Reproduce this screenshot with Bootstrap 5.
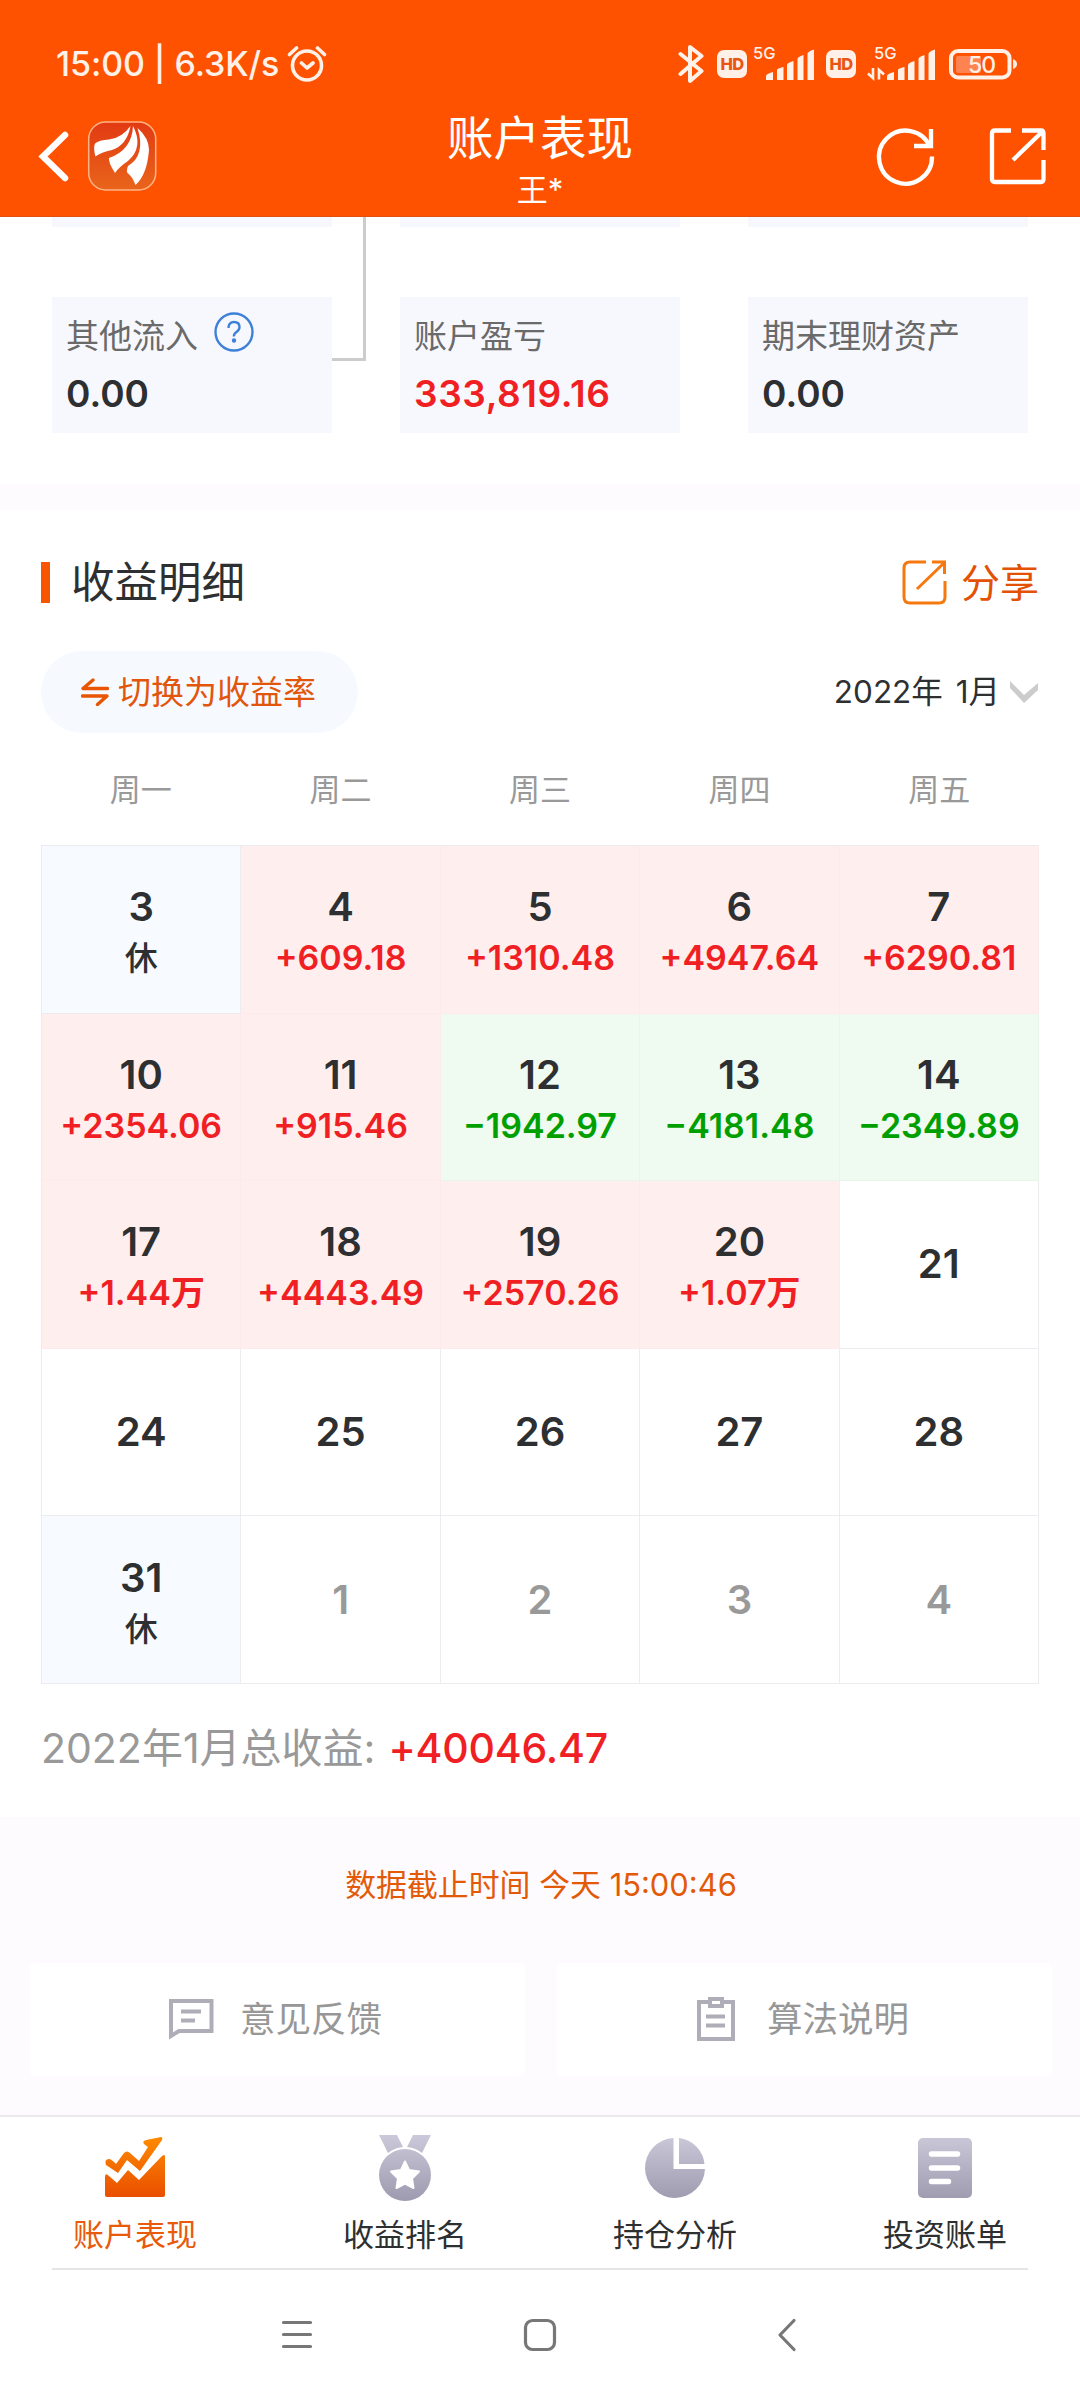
<!DOCTYPE html>
<html lang="zh-CN">
<head>
<meta charset="utf-8">
<meta name="viewport" content="width=device-width, initial-scale=1">
<title>账户表现</title>
<link href="https://cdn.jsdelivr.net/npm/bootstrap@5.3.0/dist/css/bootstrap.min.css" rel="stylesheet">
<style>
  body { width: 1080px; height: 2400px; overflow: hidden; background: #fff; color: #2d2f31; line-height: 1;
    font-family: Inter, "Noto Sans CJK SC", sans-serif; }
  svg { display: block; flex: none; }
  .app-head { height: 217px; background: #ff5200; color: #fff; border-bottom: 1px solid #e2500f; }
  .status-line { height: 63px; margin-top: 32px; padding-left: 56px; padding-right: 62px; color: #fff0e8; font-size: 34px; font-weight: 500; letter-spacing: -.1px; }
  .title-line { height: 121px; }
  .side { width: 300px; height: 121px; }
  .page-name { font-size: 46.5px; margin-top: 20px; }
  .owner { font-size: 31px; margin-top: 12px; }

  .flow-area { height: 267px; padding: 0 52px; }
  .tile { width: 280px; background: #f7f8fe; }
  .tile-stub { height: 10px; }
  .tile-full { height: 136px; margin-top: 70px; padding: 22px 14px 0; }
  .tile-label { height: 34px; font-size: 33px; color: #6a6a6a; }
  .tile-value { font-size: 37px; font-weight: 600; margin-top: 22px; }
  .tile-value.rise { letter-spacing: .6px; }
  .link-line { width: 34px; height: 144px; left: 332px; top: 0; border: solid #ccc; border-width: 0 3px 3px 0; }
  .gap-band { height: 26px; background: #fefbff; }

  .rise { color: #f01f24; } .fall { color: #009f00; }
  .detail { padding: 50px 41px 0; height: 1307px; }
  .sec-head { height: 44px; }
  .sec-bar { width: 9px; height: 41px; background: #f75500; margin-right: 21px; }
  .sec-title { font-size: 43.5px; padding-top: 1px; }
  .share-link { font-size: 39px; color: #e25104; }
  .tool-row { height: 82px; margin-top: 47px; }
  .switch-pill { width: 317px; height: 82px; background: #f6faff; color: #e2560c; font-size: 33px; padding-left: 40px; border-radius: 41px; }
  .month-pick { font-size: 31.5px; word-spacing: 4px; }
  .week-row { height: 112px; font-size: 31px; color: #999; }
  .week-row span, .day { width: 20%; text-align: center; }
  .cal { height: 839px; border-top: 1px solid #ececf0; border-left: 1px solid #ececf0; }
  .day { height: 167.6px; border-right: 1px solid #ececf0; border-bottom: 1px solid #ececf0; display: flex; flex-direction: column;
    align-items: center; justify-content: center; font-size: 40px; font-weight: 600; white-space: nowrap; }
  .day.duo { padding-top: 5px; }
  .day small { font-size: 34px; line-height: 36px; margin-top: 13px; font-weight: 600; }
  .day .rest { font-size: 33px; font-weight: 500; }
  .day.up { background: #ffeeee; border-color: #fdebec; } .day.down { background: #effaf0; border-color: #e8f6ea; }
  .day.off { background: #f7fbff; } .day.next { color: #999; }
  .total { font-size: 41px; color: #999; margin-top: 42px; height: 44px; }
  .total b { font-weight: 450; margin-left: 13px; letter-spacing: -.2px; }

  .foot-zone { height: 298px; background: #fefbff; padding: 0 28px 0 30px; }
  .stamp { color: #e25a08; font-size: 30.9px; height: 34px; margin-top: 53px; }
  .foot-btns { margin-top: 59px; }
  .foot-btn { width: 495px; height: 113px; background: #fff; border-radius: 5px; font-size: 35.5px; color: #979797; padding-left: 139px; }
  .tab-bar { height: 153px; margin: 0 52px; border-bottom: 2px solid #e5e5e5; }
  .tab-wrap { border-top: 2px solid #ebebee; }
  .tab { width: 270px; padding-top: 14px; font-size: 31px; }
  .tab svg { margin-bottom: 16px; }
  .tab.on { color: #e85a0c; }
  .tab-list { margin: 0 -52px; }
</style>
<script src="https://cdn.jsdelivr.net/npm/bootstrap@5.3.0/dist/js/bootstrap.bundle.min.js"></script>
</head>
<body>
<header class="app-head d-flex flex-column">
  <div class="status-line d-flex align-items-center">
    <span>15:00 | 6.3K/s</span>
    <svg class="ms-2" width="40" height="38" viewBox="0 0 40 38" fill="none" stroke="#fff0e8" stroke-width="3.6" stroke-linecap="round" stroke-linejoin="round"><circle cx="20" cy="20.500" r="14.500"/><path d="M14.500 18l5.500 5 6-5M2.500 9.500l7-6.500M37.500 9.500l-7-6.500"/></svg>
    <svg class="ms-auto" width="340" height="40" viewBox="678 43 340 40" fill="#fff0e8">
      <path d="M680.500 53l21 17-11.500 10V46l11.500 9-21 18" fill="none" stroke="#fff0e8" stroke-width="4" stroke-linejoin="round" stroke-linecap="round"/>
      <g><rect x="717" y="49" width="30" height="28" rx="7"/><text x="732" y="69" font-size="16.500" font-weight="800" letter-spacing="-.6" text-anchor="middle" fill="#e95613">HD</text></g>
      <g><rect x="826" y="49" width="30" height="28" rx="7"/><text x="841" y="69" font-size="16.500" font-weight="800" letter-spacing="-.6" text-anchor="middle" fill="#e95613">HD</text></g>
      <text x="753" y="58" font-size="16.500" font-weight="500" letter-spacing="0">5G</text>
      <text x="874" y="58" font-size="16.500" font-weight="500" letter-spacing="0">5G</text>
      <g id="bars"><path d="M766 79v-4q0-2 7-4v8zM777 79V69q0-1.500 6.500-3v13zM787 79V64q0-2 6.500-4v19zM797.500 79V58q0-2 6-4v25zM807.500 79V53q0-2.500 6.500-4.500V79z"/></g>
      <use href="#bars" x="121"/>
      <path d="M873 67v10l-5-4.500M879 78.500V69l5 4.500" fill="none" stroke="#fff0e8" stroke-width="2.600"/>
      <rect x="951" y="50" width="58.500" height="26.500" rx="7" fill="none" stroke="#fff0e8" stroke-width="4"/>
      <rect x="956" y="55" width="25" height="17" rx="2" fill="#ff8350"/>
      <path d="M1013 58q4 1.500 4 5t-4 5z"/>
      <text x="981.500" y="72" font-size="23" font-weight="500" letter-spacing="-1" text-anchor="middle">50</text>
    </svg>
  </div>
  <div class="title-line d-flex justify-content-between">
    <div class="side">
      <svg width="160" height="121" viewBox="0 95 160 121">
        <defs><linearGradient id="lg" x2="0" y2="1"><stop stop-color="#e23a13"/><stop offset="1" stop-color="#e9651b"/></linearGradient></defs>
        <path d="M65 135L43 156.500 65 178" fill="none" stroke="#fff" stroke-width="6.500" stroke-linecap="round"/>
        <rect x="88.700" y="122" width="67" height="68" rx="17" fill="url(#lg)" stroke="#ffb384" stroke-width="1.500"/>
        <g fill="#fff"><path d="M130.500 126Q122 138 109 139.500 99 140 95 143.500Q93 148 95.500 156.500 101 152 112 150 127 145 130.500 126z"/><path d="M133 126Q132 150 109 158 108 162 115 173 119 167 128 161 144 147 133 126z"/><path d="M137.500 128Q149 138 149 150 147 175 135.500 185 132 176 127.500 173 126 171 128 166 146 155 137.500 128z"/></g>
      </svg>
    </div>
    <div class="text-center"><div class="page-name">账户表现</div><div class="owner">王*</div></div>
    <div class="side">
      <svg width="300" height="121" viewBox="780 95 300 121" fill="none" stroke="#fff" stroke-width="4.300">
        <path d="M932 156.500A26.500 26.500 0 1 1 930 147"/><path d="M931 129v17h-17"/>
        <path d="M1011 130.500h-16q-3 0-3 3V179q0 3 3 3h46q2.500 0 2.500-3v-19M1022 130.500h19q2.500 0 2.500 3V150M1042 132l-29 28"/>
      </svg>
    </div>
  </div>
</header>

<section class="flow-area position-relative">
  <div class="d-flex justify-content-between"><div class="tile tile-stub"></div><div class="tile tile-stub"></div><div class="tile tile-stub"></div></div>
  <div class="d-flex justify-content-between">
    <div class="tile tile-full">
      <div class="tile-label d-flex align-items-center">其他流入
        <svg style="margin:-8px 0 0 16px" width="40" height="40" viewBox="0 0 40 40" fill="none" stroke="#3e81d8" stroke-width="2.400"><circle cx="20" cy="20" r="18.500"/><path d="M14.500 16q0-6 5.500-6t5.500 5q0 3-3 5t-2.500 4.500"/><circle cx="20" cy="28.500" r="1" fill="#3e81d8"/></svg>
      </div>
      <div class="tile-value">0.00</div>
    </div>
    <div class="tile tile-full"><div class="tile-label d-flex align-items-center">账户盈亏</div><div class="tile-value rise">333,819.16</div></div>
    <div class="tile tile-full"><div class="tile-label d-flex align-items-center">期末理财资产</div><div class="tile-value">0.00</div></div>
  </div>
  <div class="link-line position-absolute"></div>
</section>
<div class="gap-band"></div>

<section class="detail">
  <div class="sec-head d-flex align-items-center">
    <div class="sec-bar"></div><div class="sec-title">收益明细</div>
    <div class="share-link ms-auto d-flex align-items-center">
      <svg style="margin-right:14px" width="45" height="45" viewBox="0 0 45 45" fill="none" stroke="#f5790f" stroke-width="3"><path d="M24 2H8Q2 2 2 8v29q0 6 6 6h29q6 0 6-6V21M30 2h12.500v12M42 3L15 29"/></svg>分享
    </div>
  </div>
  <div class="tool-row d-flex align-items-center">
    <div class="switch-pill d-flex align-items-center">
      <svg width="28" height="28" viewBox="0 0 28 28" fill="none" stroke="#ea5504" stroke-width="3.400" stroke-linecap="round" stroke-linejoin="round" style="margin-right:9px"><path d="M12 2L2 10.500h24.500M1.500 18H26L16.500 26.500"/></svg>切换为收益率
    </div>
    <div class="month-pick ms-auto d-flex align-items-center">2022年 1月
      <svg style="margin-left:9px" width="30" height="22" viewBox="0 0 30 22" fill="#ccc"><path d="M1 0l14 14L29 2v7L15 22 1 7z"/></svg>
    </div>
  </div>
  <div class="week-row d-flex align-items-center"><span>周一</span><span>周二</span><span>周三</span><span>周四</span><span>周五</span></div>
  <div class="cal d-flex flex-wrap">
    <div class="day duo off">3<small class="rest">休</small></div>
    <div class="day duo up">4<small class="rise">+609.18</small></div>
    <div class="day duo up">5<small class="rise">+1310.48</small></div>
    <div class="day duo up">6<small class="rise">+4947.64</small></div>
    <div class="day duo up">7<small class="rise">+6290.81</small></div>
    <div class="day duo up">10<small class="rise">+2354.06</small></div>
    <div class="day duo up">11<small class="rise">+915.46</small></div>
    <div class="day duo down">12<small class="fall">−1942.97</small></div>
    <div class="day duo down">13<small class="fall">−4181.48</small></div>
    <div class="day duo down">14<small class="fall">−2349.89</small></div>
    <div class="day duo up">17<small class="rise">+1.44万</small></div>
    <div class="day duo up">18<small class="rise">+4443.49</small></div>
    <div class="day duo up">19<small class="rise">+2570.26</small></div>
    <div class="day duo up">20<small class="rise">+1.07万</small></div>
    <div class="day">21</div>
    <div class="day">24</div><div class="day">25</div><div class="day">26</div><div class="day">27</div><div class="day">28</div>
    <div class="day duo off">31<small class="rest">休</small></div>
    <div class="day next">1</div><div class="day next">2</div><div class="day next">3</div><div class="day next">4</div>
  </div>
  <div class="total d-flex align-items-center">2022年1月总收益: <b class="rise">+40046.47</b></div>
</section>

<section class="foot-zone d-flex flex-column">
  <div class="stamp text-center">数据截止时间 今天 15:00:46</div>
  <div class="foot-btns d-flex justify-content-between">
    <div class="foot-btn d-flex align-items-center">
      <svg style="margin-right:26px" width="45" height="43" viewBox="0 0 45 43" fill="none" stroke="#aeadb8" stroke-width="4"><path d="M2 38V3h40.500v30H10z" /><path d="M12 13.500h20M12 22.500h14"/></svg>意见反馈
    </div>
    <div class="foot-btn d-flex align-items-center">
      <svg style="margin-right:31px" width="40" height="45" viewBox="0 0 40 45" fill="none" stroke="#aeadb8" stroke-width="4"><path d="M3 5h34v37H3z"/><path d="M10 19.500h19M10 28.500h19"/><path d="M14 2h12v7H14z" fill="#fff"/></svg>算法说明
    </div>
  </div>
</section>

<nav class="tab-wrap">
  <div class="tab-bar"><div class="tab-list d-flex">
    <svg width="0" height="0" class="position-absolute"><defs>
      <linearGradient id="og" gradientUnits="userSpaceOnUse" x1="0" y1="4" x2="0" y2="66"><stop stop-color="#ff8c00"/><stop offset="1" stop-color="#e94f00"/></linearGradient>
      <linearGradient id="gg" gradientUnits="userSpaceOnUse" x1="0" y1="2" x2="0" y2="68"><stop stop-color="#cdcadb"/><stop offset="1" stop-color="#9f9bb0"/></linearGradient></defs></svg>
    <div class="tab on d-flex flex-column align-items-center">
      <svg width="68" height="72" viewBox="0 0 68 72" fill="url(#og)"><path d="M4 46q0-5 4-1l8 7 11-13 11 10L60 26q4-4 4 0v38q0 2-2 2H6q-2 0-2-2z"/><path d="M5 34Q3 28 8 28q2 0 7 5l8-11q3-3 6 0l9 8L47 16l-4-3q-2-3 2-4l15-3q2 0 1 3L39 40 26 29l-9 13z"/></svg>账户表现
    </div>
    <div class="tab d-flex flex-column align-items-center">
      <svg width="68" height="72" viewBox="0 0 68 72"><g fill="url(#gg)"><path d="M8 4h18l6 12q-9 1-15 6zM60 4H42l-6 12q9 1 15 6z"/><circle cx="34" cy="44" r="26"/></g><path d="M34 30.500l4 8.500 10 1.500-7 7 1.500 9.500-8.500-4.500-8.500 4.500 1.500-9.500-7-7 10-1.500z" fill="#fff" stroke="#fff" stroke-width="2" stroke-linejoin="round"/></svg>收益排名
    </div>
    <div class="tab d-flex flex-column align-items-center">
      <svg width="68" height="72" viewBox="0 0 68 72" fill="url(#gg)"><path d="M32.500 7v31H64A30 30 0 1 1 32.500 7z"/><path d="M38 7a29 29 0 0 1 25.500 26H38z"/></svg>持仓分析
    </div>
    <div class="tab d-flex flex-column align-items-center">
      <svg width="68" height="72" viewBox="0 0 68 72"><rect x="7" y="7" width="54" height="60" rx="5" fill="url(#gg)"/><path d="M20.500 23h26M20.500 37h26M20.500 50.500h17" stroke="#fff" stroke-width="5.500" stroke-linecap="round"/></svg>投资账单
    </div>
  </div></div>
</nav>
<div class="d-flex justify-content-center">
  <svg width="1080" height="128" viewBox="0 2270 1080 128" fill="none" stroke="#777" stroke-width="3.200" stroke-linecap="round" stroke-linejoin="round"><path d="M283.500 2322.500h27M283.500 2334.500h27M283.500 2346.500h27"/><rect x="525.500" y="2320.500" width="29" height="29" rx="7"/><path d="M794 2320.500L780 2335l14 14.500"/></svg>
</div>
</body>
</html>
